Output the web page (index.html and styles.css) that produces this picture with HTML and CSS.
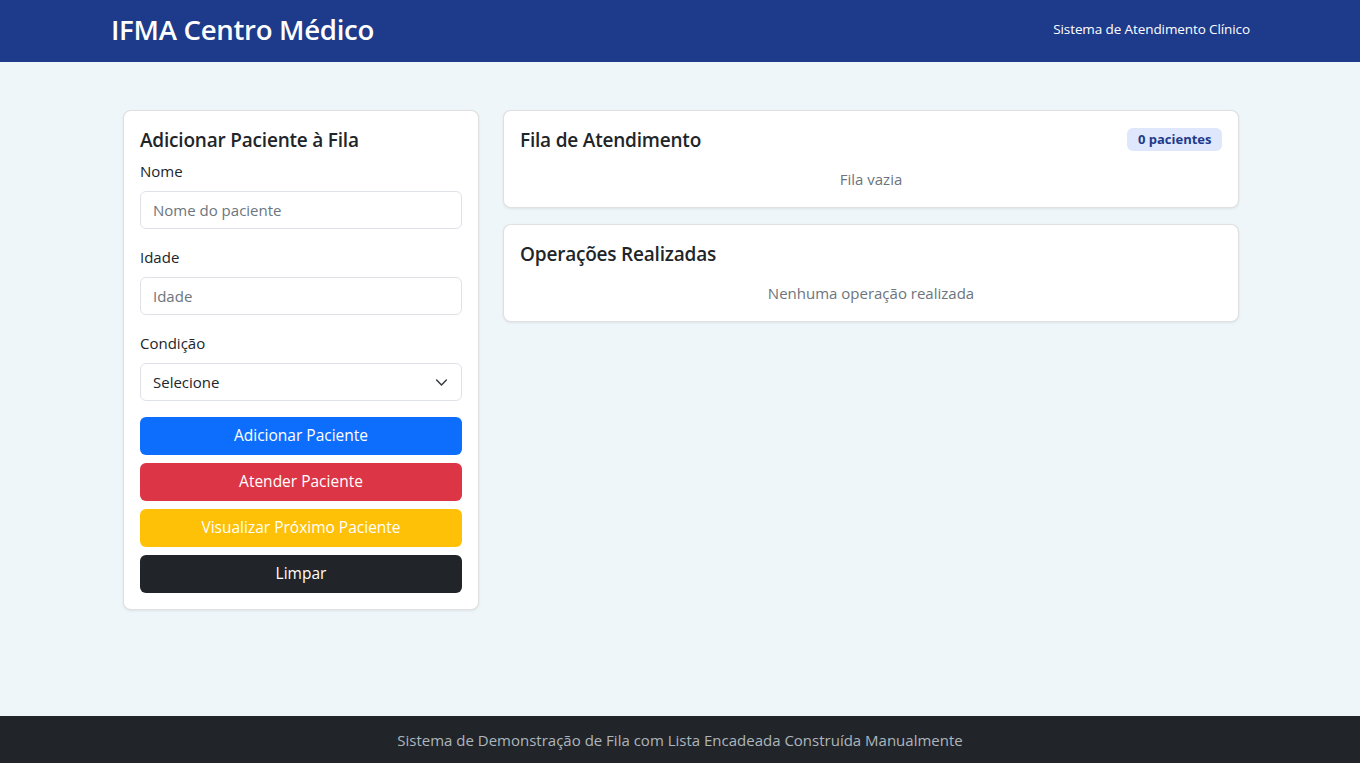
FILE: index.html
```html
<!DOCTYPE html>
<html lang="pt-BR">
<head>
<meta charset="utf-8">
<title>IFMA Centro Médico</title>
<link rel="stylesheet" href="styles.css">
</head>
<body>
<header class="navbar">
  <div class="nav-inner">
    <span class="brand">IFMA Centro Médico</span>
    <span class="nav-text">Sistema de Atendimento Clínico</span>
  </div>
</header>
<main class="container">
  <div class="row">
    <section class="col-side">
      <div class="card">
        <div class="card-body">
          <h5 class="card-title">Adicionar Paciente à Fila</h5>
          <div class="field">
            <label class="form-label">Nome</label>
            <input class="form-control" type="text" placeholder="Nome do paciente">
          </div>
          <div class="field">
            <label class="form-label">Idade</label>
            <input class="form-control" type="text" placeholder="Idade">
          </div>
          <div class="field">
            <label class="form-label">Condição</label>
            <div class="select-wrap">
              <select class="form-select">
                <option>Selecione</option>
              </select>
              <svg class="chevron" width="16" height="16" viewBox="0 0 16 16"><path d="M2 5l6 6 6-6" fill="none" stroke="#343a40" stroke-width="1.8" stroke-linecap="round" stroke-linejoin="round"/></svg>
            </div>
          </div>
          <div class="btn-grid">
            <button class="btn btn-primary">Adicionar Paciente</button>
            <button class="btn btn-danger">Atender Paciente</button>
            <button class="btn btn-warning">Visualizar Próximo Paciente</button>
            <button class="btn btn-dark">Limpar</button>
          </div>
        </div>
      </div>
    </section>
    <section class="col-main">
      <div class="card mb">
        <div class="card-body">
          <div class="card-head">
            <h5 class="card-title m0">Fila de Atendimento</h5>
            <span class="badge">0 pacientes</span>
          </div>
          <p class="muted">Fila vazia</p>
        </div>
      </div>
      <div class="card">
        <div class="card-body">
          <div class="card-head">
            <h5 class="card-title m0">Operações Realizadas</h5>
          </div>
          <p class="muted">Nenhuma operação realizada</p>
        </div>
      </div>
    </section>
  </div>
</main>
<footer class="footer">Sistema de Demonstração de Fila com Lista Encadeada Construída Manualmente</footer>
</body>
</html>
```
FILE: styles.css
```css
* { box-sizing: border-box; }
html, body { margin: 0; padding: 0; }
body {
  font-family: "Open Sans", "Noto Sans", sans-serif;
  font-size: 16px;
  line-height: 1.5;
  color: #212529;
  background: #eff6f9;
  min-height: 100vh;
  display: flex;
  flex-direction: column;
}
.navbar {
  background: #1e3a8a;
  height: 62px;
  color: #fff;
}
.nav-inner {
  width: 1140px;
  margin: 0 auto;
  height: 100%;
  display: flex;
  align-items: center;
  justify-content: space-between;
}
.brand {
  font-size: 27.6px;
  font-weight: 600;
  letter-spacing: -0.3px;
  line-height: 1;
  padding-left: 1px;
  margin-top: -2px;
}
.nav-text {
  font-size: 13.5px;
  letter-spacing: -0.1px;
  margin-top: -4px;
}
.container {
  width: 1140px;
  margin: 48px auto 0;
  padding: 0 11px 0 13px;
  flex: 1;
}
.row {
  display: flex;
  gap: 24px;
  align-items: flex-start;
}
.col-side { width: 356px; flex: none; }
.col-main { flex: 1; }
.card {
  background: #fff;
  border: 1px solid rgba(0,0,0,0.12);
  border-radius: 8px;
  box-shadow: 0 1px 3px rgba(0,0,0,0.08);
}
.card.mb { margin-bottom: 16px; }
.card-body { padding: 16px; }
.card-title {
  margin: 0 0 8px;
  padding-top: 2px;
  font-size: 19px;
  font-weight: 600;
  line-height: 22px;
  letter-spacing: -0.2px;
}
.card-title.m0 { margin: 0; }
.field { margin-bottom: 16px; }
.form-label {
  display: block;
  margin-bottom: 8px;
  font-size: 15px;
  line-height: 24px;
}
.form-control, .form-select {
  display: block;
  width: 100%;
  height: 38px;
  padding: 6px 12px;
  font: inherit;
  font-size: 15px;
  color: #212529;
  background: #fff;
  border: 1px solid #dee2e6;
  border-radius: 6px;
  outline: none;
}
.form-control::placeholder { color: #6c757d; opacity: 1; }
.select-wrap { position: relative; }
.form-select { appearance: none; -webkit-appearance: none; }
.chevron {
  position: absolute;
  right: 14px;
  top: 13px;
  width: 13px;
  height: 13px;
  pointer-events: none;
}
.btn-grid { display: grid; gap: 8px; }
.btn {
  height: 38px;
  border: 1px solid transparent;
  border-radius: 6px;
  font: inherit;
  font-size: 15.5px;
  color: #fff;
  padding: 6px 12px;
}
.btn-primary { background: #0d6efd; }
.btn-danger { background: #dc3545; }
.btn-warning { background: #ffc107; }
.btn-dark { background: #212529; }
.card-head {
  display: flex;
  justify-content: space-between;
  align-items: center;
  margin-bottom: 16px;
  min-height: 24px;
}
.badge {
  background: #dfe7fd;
  color: #1e3a8a;
  font-size: 13px;
  font-weight: 700;
  padding: 3px 10.5px;
  border-radius: 6px;
  line-height: 17px;
}
.muted {
  margin: 0;
  text-align: center;
  color: #6c757d;
  font-size: 15px;
  line-height: 24px;
}
.footer {
  background: #212529;
  color: #adb5bd;
  text-align: center;
  padding: 12px 0 11px;
  font-size: 15px;
  line-height: 24px;
}
```
